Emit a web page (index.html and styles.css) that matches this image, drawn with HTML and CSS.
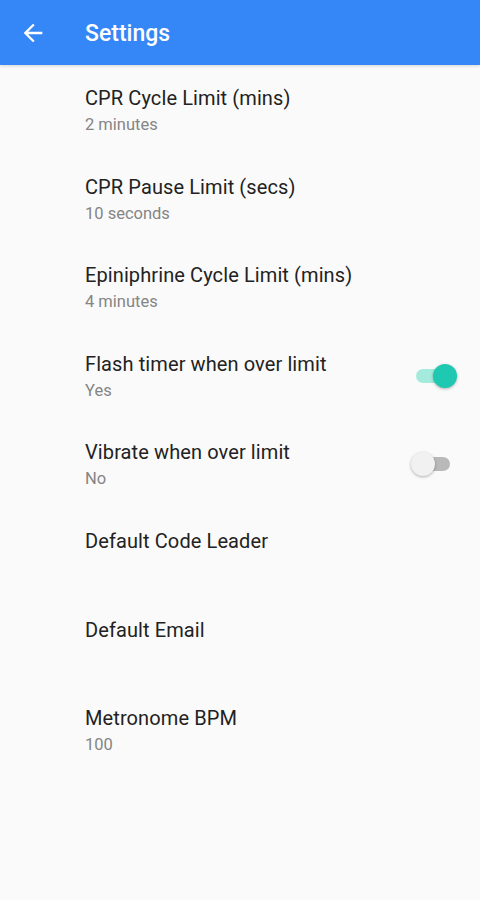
FILE: index.html
```html
<!DOCTYPE html>
<html>
<head>
  <title>Settings</title>
  <link rel="stylesheet" href="styles.css">
</head>
<body>
  <div class="appbar">
    <svg class="back" width="28" height="28" viewBox="0 0 24 24">
      <path d="M20 11H7.83l5.59-5.59L12 4l-8 8 8 8 1.41-1.41L7.83 13H20v-2z" fill="#fff"/>
    </svg>
    <span class="title">Settings</span>
  </div>

  <div class="list">
    <div class="row">
      <div class="text">
        <div class="label">CPR Cycle Limit (mins)</div>
        <div class="summary">2 minutes</div>
      </div>
    </div>
    <div class="row">
      <div class="text">
        <div class="label">CPR Pause Limit (secs)</div>
        <div class="summary">10 seconds</div>
      </div>
    </div>
    <div class="row">
      <div class="text">
        <div class="label">Epiniphrine Cycle Limit (mins)</div>
        <div class="summary">4 minutes</div>
      </div>
    </div>
    <div class="row">
      <div class="text">
        <div class="label">Flash timer when over limit</div>
        <div class="summary">Yes</div>
      </div>
      <div class="switch on"><span class="thumb"></span></div>
    </div>
    <div class="row">
      <div class="text">
        <div class="label">Vibrate when over limit</div>
        <div class="summary">No</div>
      </div>
      <div class="switch"><span class="thumb"></span></div>
    </div>
    <div class="row">
      <div class="text">
        <div class="label">Default Code Leader</div>
      </div>
    </div>
    <div class="row">
      <div class="text">
        <div class="label">Default Email</div>
      </div>
    </div>
    <div class="row">
      <div class="text">
        <div class="label">Metronome BPM</div>
        <div class="summary">100</div>
      </div>
    </div>
  </div>
</body>
</html>
```

FILE: styles.css
```css
body {
  margin: 0;
  background: #fafafa;
  font-family: Roboto, "Noto Sans", Arial, sans-serif;
}
.appbar {
  height: 65px;
  background: #3586f6;
  display: flex;
  align-items: center;
  box-shadow: 0 1px 3px rgba(0,0,0,0.15);
}
.back {
  margin-left: 19px;
  margin-right: 38px;
}
.title {
  color: #fff;
  font-size: 23px;
  font-weight: 500;
  margin-top: 1px;
}
.row {
  box-sizing: border-box;
  height: 88.6px;
  padding: 21px 30px 0 85px;
  display: flex;
  align-items: flex-start;
}
.text {
  flex: 1;
}
.label {
  font-size: 20px;
  line-height: 24px;
  color: #222;
  letter-spacing: 0.1px;
}
.summary {
  font-size: 16.5px;
  line-height: 20px;
  margin-top: 5px;
  color: #858585;
}
.switch {
  position: relative;
  width: 34px;
  height: 14px;
  border-radius: 7px;
  background: #b9b9b9;
  margin-top: 17px;
}
.switch .thumb {
  position: absolute;
  top: -5px;
  left: -5px;
  width: 24px;
  height: 24px;
  border-radius: 50%;
  background: #f1f1f1;
  box-shadow: 0 1px 3px rgba(0,0,0,0.3);
}
.switch.on {
  background: #a4ebde;
}
.switch.on .thumb {
  left: 17px;
  background: #1fc9b1;
}
```
